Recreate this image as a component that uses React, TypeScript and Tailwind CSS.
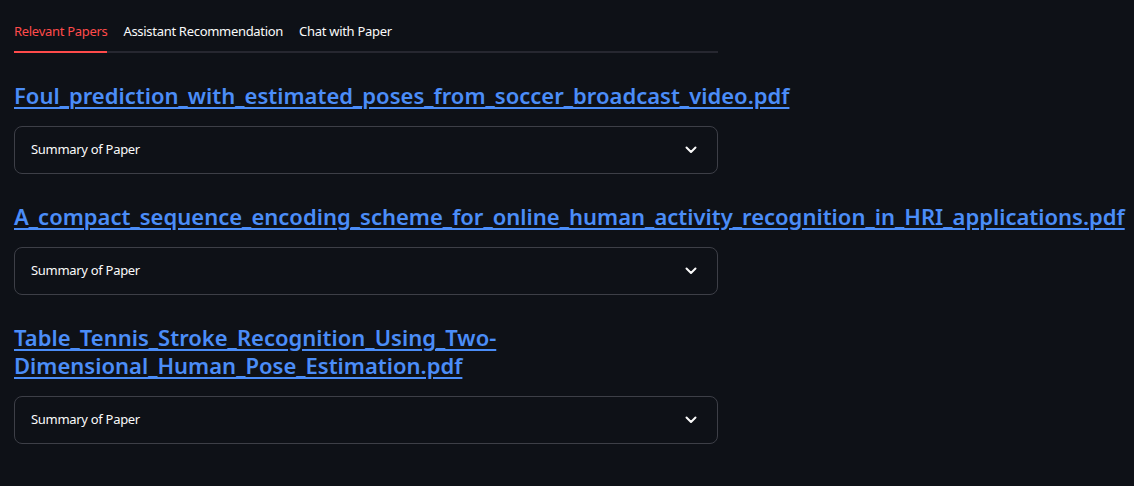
import React from "react";

const papers = [
  "Foul_prediction_with_estimated_poses_from_soccer_broadcast_video.pdf",
  "A_compact_sequence_encoding_scheme_for_online_human_activity_recognition_in_HRI_applications.pdf",
  "Table_Tennis_Stroke_Recognition_Using_Two-Dimensional_Human_Pose_Estimation.pdf",
];

function Chevron() {
  return (
    <svg width="12" height="8" viewBox="0 0 12 8" fill="none">
      <path d="M1.5 1.5 L6 6 L10.5 1.5" stroke="#fafafa" strokeWidth="2" strokeLinecap="round" strokeLinejoin="round" />
    </svg>
  );
}

export default function App() {
  return (
    <div
      className="min-h-[486px] w-full bg-[#0e1117] text-[#fafafa]"
      style={{ fontFamily: '"Noto Sans", sans-serif' }}
    >
      <div className="w-[718px] pl-[14px] pt-[12px]">
        <div className="flex h-[41px] gap-4 border-b-2 border-[#262730] text-[13px] tracking-[-0.3px]">
          <div className="relative flex items-center text-[#ff4b4b]">
            Relevant Papers
            <div className="absolute bottom-[-2px] left-0 right-0 h-[2px] bg-[#ff4b4b]" />
          </div>
          <div className="flex items-center">Assistant Recommendation</div>
          <div className="flex items-center">Chat with Paper</div>
        </div>
        <div className="flex flex-col gap-[28px] pt-[28px]">
          {papers.map((p, i) => (
            <div key={i} className="flex flex-col">
              <a
                href="#"
                className="text-[22px] font-semibold leading-[28px] text-[#4b8df8] underline decoration-[2px] underline-offset-[3px]"
              >
                {p}
              </a>
              <div className="mt-[17px] flex h-[48px] items-center justify-between rounded-lg border border-[#3d3f47] px-4 text-[13px] tracking-[-0.3px]">
                <span>Summary of Paper</span>
                <span className="mr-[4px]">
                  <Chevron />
                </span>
              </div>
            </div>
          ))}
        </div>
      </div>
    </div>
  );
}
